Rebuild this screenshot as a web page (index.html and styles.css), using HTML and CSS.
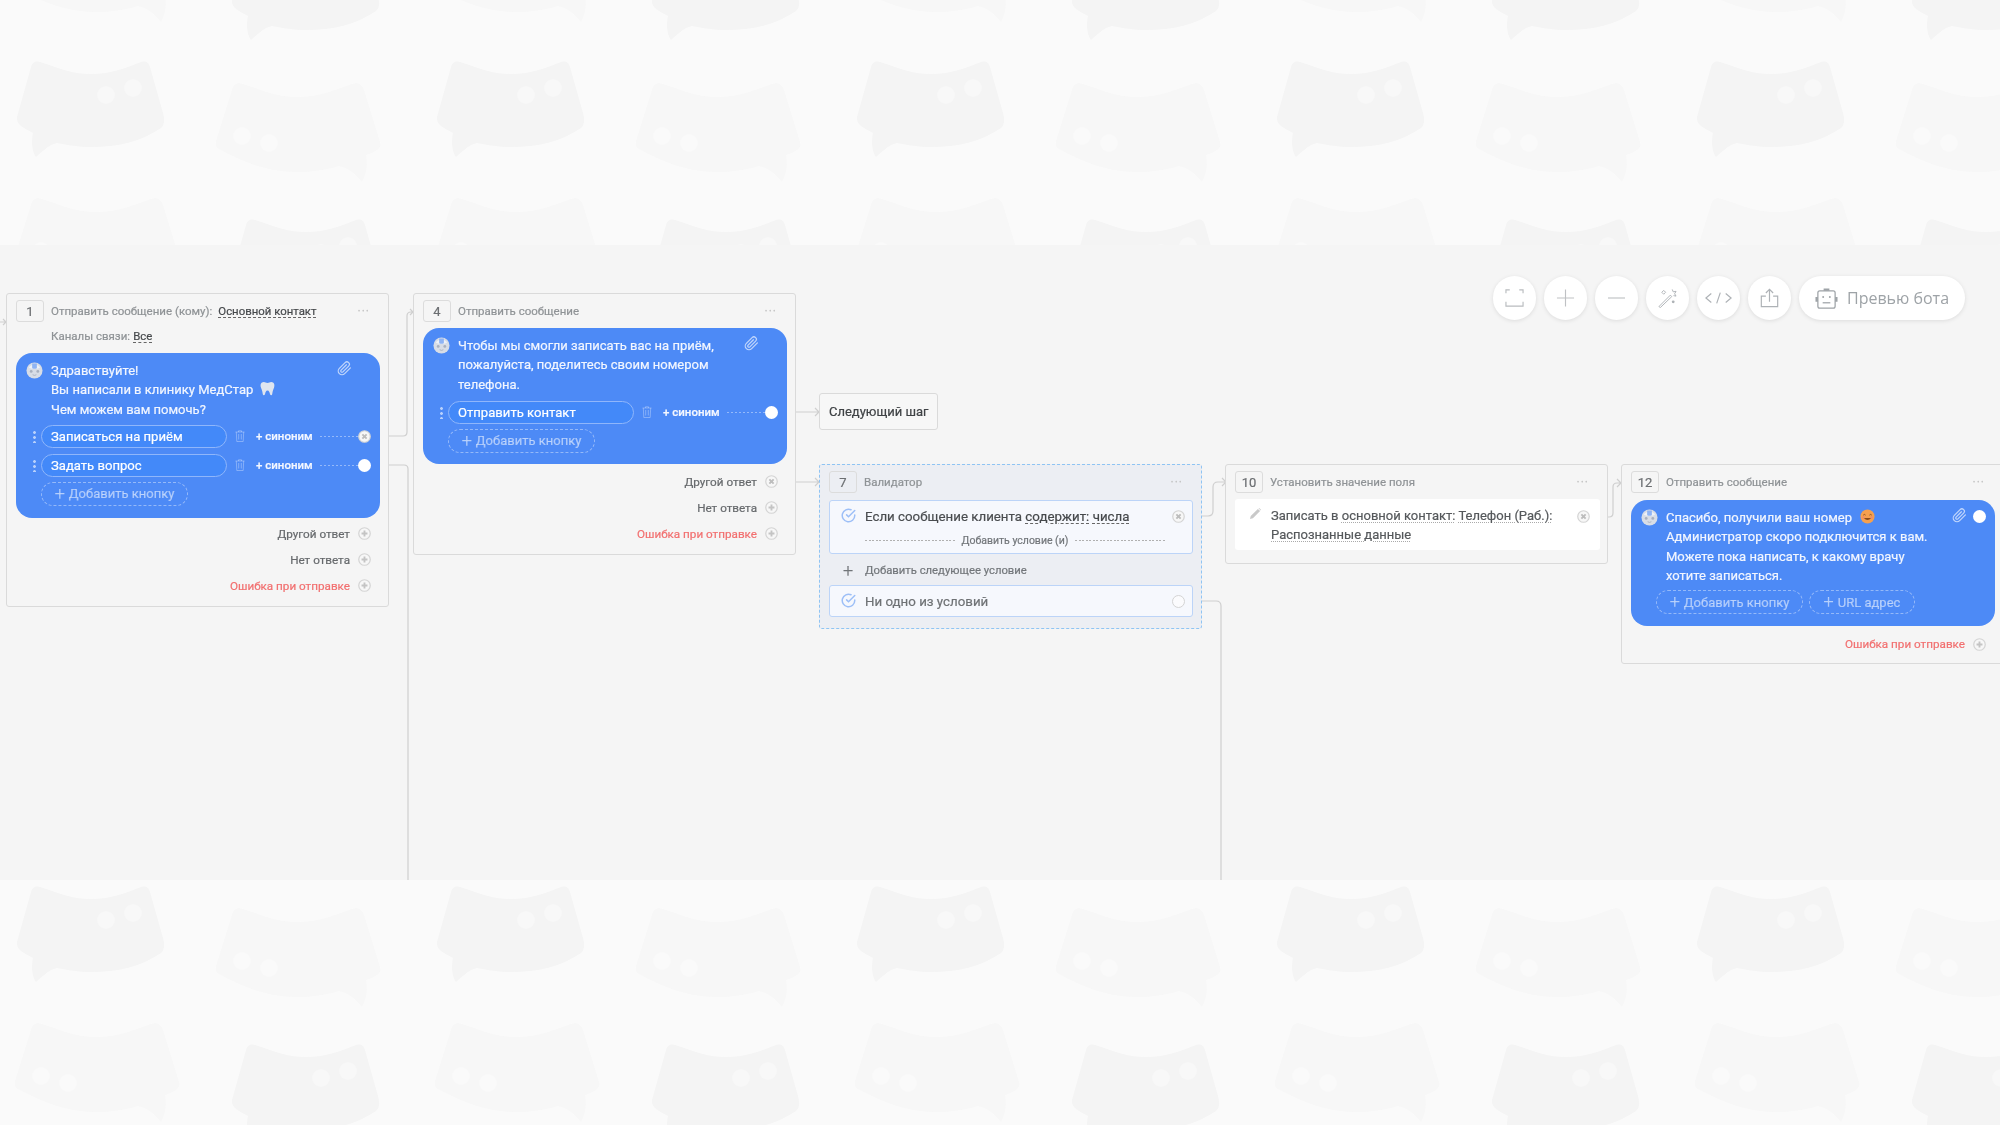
FILE: index.html
```html
<!DOCTYPE html>
<html lang="ru">
<head>
<meta charset="utf-8">
<title>Конструктор бота</title>
<link rel="stylesheet" href="styles.css">
</head>
<body>
<svg class="defs" width="0" height="0" aria-hidden="true">
  <defs>
    <symbol id="i-avatar" viewBox="0 0 18 18">
      <circle cx="9" cy="9" r="8.5" fill="#d8dde6"/>
      <path d="M3 5.5A8.500 8.500 0 0 1 15 5.500C13 8 5 8 3 5.500Z" fill="#eef2f8"/>
      <path d="M6.500 1.500h5v5q-2.500 1.500-5 0Z" fill="#8fb4f4"/>
      <circle cx="5.500" cy="10" r="1.500" fill="#a9b1bf"/>
      <circle cx="12.500" cy="10" r="1.500" fill="#a9b1bf"/>
      <path d="M7 13.500q2 1.300 4 0" fill="none" stroke="#a9b1bf"/>
    </symbol>
    <symbol id="i-clip" viewBox="0 0 24 24">
      <path d="M21.440 11.050l-9.190 9.190a6 6 0 0 1-8.490-8.490l9.190-9.190a4 4 0 0 1 5.660 5.660l-9.200 9.190a2 2 0 0 1-2.830-2.830l8.490-8.480" fill="none" stroke="currentColor" stroke-width="2" stroke-linecap="round"/>
    </symbol>
    <symbol id="i-trash" viewBox="0 0 10 12">
      <path d="M.5 2h9M3.500 2V.8h3V2M1.300 2l.5 9.500h6.400l.5-9.500M3.700 4v5.500M6.300 4v5.500" fill="none" stroke="currentColor" stroke-width=".9"/>
    </symbol>
    <symbol id="i-plus" viewBox="0 0 14 14">
      <circle cx="7" cy="7" r="6.200" fill="#f7f7f7" stroke="#d4d4d4" stroke-width="1.300"/>
      <path d="M7 3.800v6.400M3.800 7h6.400" stroke="#c4c4c4" stroke-width="2"/>
    </symbol>
    <symbol id="i-x" viewBox="0 0 14 14">
      <circle cx="7" cy="7" r="6.200" fill="#f7f7f7" stroke="#d4d4d4" stroke-width="1.300"/>
      <path d="M4.700 4.700l4.600 4.600M9.300 4.700l-4.600 4.600" stroke="#bdbdbd" stroke-width="2"/>
    </symbol>
    <symbol id="i-check" viewBox="0 0 24 24">
      <path d="M22 11.080V12a10 10 0 1 1-5.930-9.140M22 4 12 14.010l-3-3" fill="none" stroke="#9dbff7" stroke-width="2.400" stroke-linecap="round"/>
    </symbol>
  </defs>
</svg>

<main class="band">
  <svg class="wires" viewBox="0 245 2000 635" width="2000" height="635" aria-hidden="true">
    <g fill="none" stroke="#cfcfcf" stroke-width="1.200">
      <path d="M0 322H6M3 319l3 3-3 3"/>
      <path d="M371 436H403Q407 436 407 432V316Q407 312 411 312H413M410 309l3 3-3 3"/>
      <path d="M371 465H404Q408 465 408 469V880"/>
      <path d="M777 412H819M815 408l4 4-4 4"/>
      <path d="M777 482H819M815 478l4 4-4 4"/>
      <path d="M1183 516H1208Q1213 516 1213 511V487Q1213 482 1218 482H1226M1222 478l4 4-4 4"/>
      <path d="M1183 601H1216Q1221 601 1221 606V880"/>
      <path d="M1590 517H1609Q1613 517 1613 513V487Q1613 483 1617 483H1621M1617 479l4 4-4 4"/>
      <path d="M1985 517H2000"/>
    </g>
  </svg>

  <section class="node node-1">
    <header class="head">
      <span class="badge">1</span>
      <span class="title">Отправить сообщение (кому):</span>
      <span class="link head-link">Основной контакт</span>
      <span class="more">···</span>
    </header>
    <div class="channels"><span class="title">Каналы связи:</span> <span class="link">Все</span></div>
    <div class="bubble">
      <div class="msg">
        <svg class="avatar"><use href="#i-avatar"/></svg>
        <p class="msg-text">Здравствуйте!<br>Вы написали в клинику МедСтар
          <svg class="tooth" viewBox="0 0 16 16"><path d="M4 1C1 1 0 4 1 7c.6 2 1.400 3 2 7 .2 1.500 1.800 1.500 2.300 0 .5-2 1-4 2.700-4s2.200 2 2.700 4c.5 1.500 2.100 1.500 2.300 0 .6-4 1.400-5 2-7 1-3 0-6-3-6-1.500 0-2.500 1-4 1S5.500 1 4 1Z" fill="#dfe5ef"/></svg>
          <br>Чем можем вам помочь?</p>
        <svg class="clip"><use href="#i-clip"/></svg>
      </div>
      <div class="btn-row">
        <span class="grip"></span>
        <span class="pill">Записаться на приём</span>
        <svg class="trash"><use href="#i-trash"/></svg>
        <span class="syn">+ синоним</span>
        <span class="dots-line"></span>
        <svg class="port"><use href="#i-x"/></svg>
      </div>
      <div class="btn-row">
        <span class="grip"></span>
        <span class="pill">Задать вопрос</span>
        <svg class="trash"><use href="#i-trash"/></svg>
        <span class="syn">+ синоним</span>
        <span class="dots-line"></span>
        <span class="port port-solid"></span>
      </div>
      <div class="add-row"><span class="add"><span class="add-plus">+</span>Добавить кнопку</span></div>
    </div>
    <div class="outs outs-tight">
      <div class="out">Другой ответ<svg class="port"><use href="#i-plus"/></svg></div>
      <div class="out">Нет ответа<svg class="port"><use href="#i-plus"/></svg></div>
      <div class="out out-err">Ошибка при отправке<svg class="port"><use href="#i-plus"/></svg></div>
    </div>
  </section>

  <section class="node node-4">
    <header class="head">
      <span class="badge">4</span>
      <span class="title">Отправить сообщение</span>
      <span class="more">···</span>
    </header>
    <div class="bubble">
      <div class="msg">
        <svg class="avatar"><use href="#i-avatar"/></svg>
        <p class="msg-text">Чтобы мы смогли записать вас на приём,<br>пожалуйста, поделитесь своим номером<br>телефона.</p>
        <svg class="clip"><use href="#i-clip"/></svg>
      </div>
      <div class="btn-row">
        <span class="grip"></span>
        <span class="pill">Отправить контакт</span>
        <svg class="trash"><use href="#i-trash"/></svg>
        <span class="syn">+ синоним</span>
        <span class="dots-line"></span>
        <span class="port port-solid"></span>
      </div>
      <div class="add-row"><span class="add"><span class="add-plus">+</span>Добавить кнопку</span></div>
    </div>
    <div class="outs">
      <div class="out">Другой ответ<svg class="port"><use href="#i-x"/></svg></div>
      <div class="out">Нет ответа<svg class="port"><use href="#i-plus"/></svg></div>
      <div class="out out-err">Ошибка при отправке<svg class="port"><use href="#i-plus"/></svg></div>
    </div>
  </section>

  <div class="next-step">Следующий шаг</div>

  <section class="node node-7">
    <header class="head">
      <span class="badge">7</span>
      <span class="title">Валидатор</span>
      <span class="more">···</span>
    </header>
    <div class="cond">
      <div class="cond-main">
        <svg class="check"><use href="#i-check"/></svg>
        <span class="cond-text">Если сообщение клиента <span class="link">содержит:</span> <span class="link">числа</span></span>
        <svg class="port"><use href="#i-x"/></svg>
      </div>
      <div class="cond-and"><span class="and-line"></span><span>Добавить условие (и)</span><span class="and-line"></span></div>
    </div>
    <div class="add-next"><span class="add-next-plus">+</span>Добавить следующее условие</div>
    <div class="cond cond-none">
      <div class="cond-main">
        <svg class="check"><use href="#i-check"/></svg>
        <span class="cond-text cond-muted">Ни одно из условий</span>
        <span class="port port-open"></span>
      </div>
    </div>
  </section>

  <section class="node node-10">
    <header class="head">
      <span class="badge">10</span>
      <span class="title">Установить значение поля</span>
      <span class="more">···</span>
    </header>
    <div class="setter">
      <svg class="pencil" viewBox="0 0 12 12"><path d="M0 12l.8-3.200L8.600 1l2.400 2.400-7.800 7.800ZM9.300.3l.7-.3 2 2-.300.7Z" fill="#c9c9c9"/></svg>
      <p class="setter-text">Записать в <span class="link-soft">основной контакт:</span> <span class="link-soft">Телефон (Раб.):</span><br><span class="link-soft">Распознанные данные</span></p>
      <svg class="port"><use href="#i-x"/></svg>
    </div>
  </section>

  <section class="node node-12">
    <header class="head">
      <span class="badge">12</span>
      <span class="title">Отправить сообщение</span>
      <span class="more">···</span>
    </header>
    <div class="bubble">
      <div class="msg">
        <svg class="avatar"><use href="#i-avatar"/></svg>
        <p class="msg-text">Спасибо, получили ваш номер
          <svg class="smile" viewBox="0 0 16 16"><circle cx="8" cy="8" r="7.500" fill="#f5a04e"/><path d="M3.500 6.500q1.200-1.500 2.400 0M10.100 6.500q1.200-1.500 2.400 0" fill="none" stroke="#8a4b1c" stroke-width="1"/><path d="M4 9.500q4 4.500 8 0Z" fill="#8a4b1c"/><circle cx="3.500" cy="9" r="1.300" fill="#f08a6a"/><circle cx="12.500" cy="9" r="1.300" fill="#f08a6a"/></svg>
          <br>Администратор скоро подключится к вам.<br>Можете пока написать, к какому врачу<br>хотите записаться.</p>
        <svg class="clip"><use href="#i-clip"/></svg>
      </div>
      <span class="port port-solid port-float"></span>
      <div class="add-row">
        <span class="add"><span class="add-plus">+</span>Добавить кнопку</span>
        <span class="add add-url"><span class="add-plus">+</span>URL адрес</span>
      </div>
    </div>
    <div class="outs">
      <div class="out out-err">Ошибка при отправке<svg class="port"><use href="#i-plus"/></svg></div>
    </div>
  </section>

  <nav class="tools">
    <button class="tool" type="button" aria-label="Во весь экран">
      <svg viewBox="0 0 20 20"><path d="M1 5V1.500H5M15 1.500H19V5M1 14V18.500H19V14" fill="none" stroke="#b9bcbf" stroke-width="1.200"/></svg>
    </button>
    <button class="tool" type="button" aria-label="Увеличить">
      <svg viewBox="0 0 20 20"><path d="M10 1V19M1 10H19" stroke="#bfc1c4" stroke-width="1.200"/></svg>
    </button>
    <button class="tool" type="button" aria-label="Уменьшить">
      <svg viewBox="0 0 20 20"><path d="M1 10H19" stroke="#bfc1c4" stroke-width="1.200"/></svg>
    </button>
    <button class="tool" type="button" aria-label="Авторасстановка">
      <svg viewBox="0 0 20 20"><path d="M1 19 13 7l1.500 1.500L2.500 20Z" fill="none" stroke="#aeb2b6"/><path d="M15 1l1 2.500L19 3l-1.500 2.500L19 8l-2.700-.5" fill="none" stroke="#aeb2b6"/><path d="M4 4l2-2 2 2-2 2Z" fill="none" stroke="#aeb2b6"/><circle cx="16" cy="14" r="1.500" fill="#aeb2b6"/></svg>
    </button>
    <button class="tool tool-code" type="button" aria-label="Код">
      <svg viewBox="0 0 30 14"><path d="M7 2 1 7l6 5M23 2l6 5-6 5M17 1l-4 12" fill="none" stroke="#aeb2b6" stroke-width="1.300"/></svg>
    </button>
    <button class="tool" type="button" aria-label="Экспорт">
      <svg viewBox="0 0 20 22"><path d="M6 9H1V20.500H19V9H14M10 15V1.500M6 5.500l4-4 4 4" fill="none" stroke="#aeb2b6" stroke-width="1.300"/></svg>
    </button>
    <button class="tool tool-wide" type="button">
      <svg viewBox="0 0 24 22"><rect x="3" y="3.500" width="18" height="18" rx="2" fill="none" stroke="#9ea3a7" stroke-width="1.300"/><path d="M9 1h6v2.500H9ZM.5 10h2.500v5H.5ZM21 10h2.500v5H21Z" fill="#9ea3a7"/><circle cx="8.500" cy="10" r="1" fill="#9ea3a7"/><circle cx="15.500" cy="10" r="1" fill="#9ea3a7"/><path d="M8 16h8" stroke="#9ea3a7" stroke-width="1.300"/></svg>
      Превью бота
    </button>
  </nav>
</main>
</body>
</html>
```
FILE: styles.css
```css
* { box-sizing: border-box; }

html, body { margin: 0; height: 1125px; overflow: hidden; }

body {
  padding-top: 245px;
  font-family: Roboto, "Noto Sans", sans-serif;
  color: #4a4d50;
  background-color: #fafafa;
  background-image: url("data:image/svg+xml,%3Csvg xmlns='http://www.w3.org/2000/svg' xmlns:xlink='http://www.w3.org/1999/xlink' width='420' height='275'%3E%3Cdefs%3E%3Cg id='a'%3E%3Cpath fill='%23f4f4f4' d='M31 67Q33 60 40 62C60 68 70 74 91 74C112 74 125 68 141 62Q148 60 150 67L163 113Q166 124 161 128C140 142 118 147 91 147C78 147 68 145 57 143C48 145 42 152 36 157C32 152 31 142 33 133C24 128 16 125 17 117Z'/%3E%3Ccircle cx='106' cy='95' r='9' fill='%23f8f8f8'/%3E%3Ccircle cx='133' cy='88' r='9' fill='%23f8f8f8'/%3E%3C/g%3E%3Cg id='l'%3E%3Cpath fill='%23f7f7f7' d='M232 90Q234 81 243 84C262 90 275 97 297 97C320 97 337 89 352 84Q361 81 364 90L380 142Q383 150 366 155C368 165 366 175 362 182C355 173 348 168 339 166C325 170 312 172 297 172C265 172 240 160 219 149Q215 147 216 141Z'/%3E%3Ccircle cx='242' cy='136' r='9' fill='%23fafafa'/%3E%3Ccircle cx='269' cy='143' r='9' fill='%23fafafa'/%3E%3C/g%3E%3C/defs%3E%3Cuse xlink:href='%23a'/%3E%3Cuse xlink:href='%23a' x='215' y='158'/%3E%3Cuse xlink:href='%23a' x='215' y='-117'/%3E%3Cuse xlink:href='%23l'/%3E%3Cuse xlink:href='%23l' x='-201' y='115'/%3E%3Cuse xlink:href='%23l' x='-201' y='-160'/%3E%3C/svg%3E");
  background-size: 420px 275px;
}

.defs { position: absolute; }

.band {
  position: relative;
  height: 635px;
  overflow: hidden;
  background: #f5f5f5;
  filter: blur(.4px);
  -webkit-text-stroke: .2px;
}

.wires { position: absolute; left: 0; top: 0; }

/* Nodes on the free canvas */
.node {
  position: absolute;
  width: 383px;
  padding: 6px 8px 0 9px;
  border: 1px solid #dadada;
  border-radius: 3px;
  background: #f5f5f5;
  font-size: 12px;
}
.node-1 { left: 6px; top: 48px; height: 314px; }
.node-4 { left: 413px; top: 48px; height: 262px; }
.node-7 { left: 819px; top: 219px; height: 165px; background: #eceef3; border: 1px dashed #8fc4f3; }
.node-10 { left: 1225px; top: 219px; height: 100px; }
.node-12 { left: 1621px; top: 219px; height: 200px; }

.head { display: flex; align-items: center; height: 22px; margin-bottom: 6px; }
.node-7 .head, .node-12 .head { margin-bottom: 7px; }
.badge {
  display: flex; align-items: center; justify-content: center;
  flex: none; width: 28px; height: 22px; margin-right: 7px;
  border: 1px solid #dcdcdc; border-radius: 3px;
  font-size: 13px; color: #6c6f72;
}
.title { color: #8f9396; font-size: 11.500px; }
.head-link { margin-left: 6px; }
.more { margin-left: auto; margin-right: 10px; color: #c4c4c4; font-size: 12px; letter-spacing: 1px; line-height: 1; }

.link { color: #45484b; font-size: 11.400px; text-decoration: underline dashed #666 1px; text-underline-offset: 2px; }
.node-7 .cond-text .link { font-size: inherit; }

.channels { height: 27px; margin-left: 35px; margin-top: -2px; line-height: 20px; }

/* Blue message */
.bubble {
  position: relative;
  width: 364px;
  padding: 8px 0 11px;
  border-radius: 16px;
  background: #4d8af6;
  color: #f2f6ff;
  font-size: 13px;
}
.node-1 .bubble { padding-bottom: 12px; }
.node-12 .bubble { padding-bottom: 12px; }
.msg { display: flex; align-items: flex-start; padding: 0 28px 0 10px; }
.avatar { flex: none; width: 17px; height: 17px; margin-top: 1px; margin-right: 8px; }
.msg-text { flex: 1; margin: 0; line-height: 19.300px; }
.clip { flex: none; width: 15px; height: 15px; margin-left: 6px; color: rgba(255,255,255,.65); }
.tooth { width: 15px; height: 15px; margin-left: 3px; vertical-align: -2px; }
.smile { width: 15px; height: 15px; margin-left: 5px; vertical-align: -2px; }

.btn-row { display: flex; align-items: center; height: 23px; margin-top: 6px; padding-left: 17px; }
.node-4 .msg + .btn-row { margin-top: 7px; }
.grip { flex: none; width: 3px; height: 13px; margin-right: 5px; background: radial-gradient(circle, rgba(255,255,255,.6) 1.300px, transparent 1.500px) 0 0 / 3px 5px; }
.pill {
  display: flex; align-items: center;
  flex: none; width: 186px; height: 23px; padding-left: 9px;
  border: 1px solid #8fb6fb; border-radius: 12px;
  background: #4389f9; color: #fff; font-size: 13.100px;
}
.trash { flex: none; width: 10px; height: 12px; margin: 0 11px 0 8px; color: rgba(255,255,255,.35); }
.syn { flex: none; width: 57px; font-size: 11.500px; font-weight: 500; color: #f4f7ff; white-space: nowrap; }
.dots-line { flex: none; width: 38px; height: 1px; margin-left: 7px; background: repeating-linear-gradient(90deg, rgba(255,255,255,.4) 0 2px, transparent 2px 4px); }

.port { flex: none; display: block; width: 13px; height: 13px; }
.port-solid { border-radius: 50%; background: #fff; }
.port-open { border-radius: 50%; background: #fbfbfd; border: 1px solid #d4d4d4; }
.port-float { position: absolute; left: 342px; top: 10px; }

.add-row { display: flex; gap: 6px; margin-top: 5px; padding-left: 25px; }
.add {
  display: flex; align-items: center; justify-content: center;
  width: 147px; height: 24px;
  border: 1px dashed rgba(255,255,255,.4); border-radius: 12px;
  color: rgba(255,255,255,.5); font-size: 13px;
}
.add-url { width: 106px; }
.add-plus { margin-right: 4px; font-size: 18px; font-weight: 300; line-height: 1; }

.outs { padding-top: 5px; }
.outs-tight { padding-top: 3px; }
.out { display: flex; align-items: center; justify-content: flex-end; height: 26px; padding-right: 9px; font-size: 11.700px; color: #66696c; }
.out .port { margin-left: 8px; }
.out-err { color: #f27070; }

.next-step {
  position: absolute; left: 819px; top: 148px;
  display: flex; align-items: center;
  width: 119px; height: 37px; padding-left: 9px;
  border: 1px solid #dadada; border-radius: 3px;
  background: #f7f7f7; color: #3f4245; font-size: 13px;
}

/* Validator */
.cond { width: 364px; border: 1px solid #bcd4f8; border-radius: 3px; background: #f6f8fd; }
.cond-main { display: flex; align-items: flex-start; padding: 7px 7px 0 11px; height: 30px; }
.check { flex: none; width: 15px; height: 15px; margin-right: 9px; }
.cond-text { flex: 1; font-size: 13.300px; color: #4a4d50; line-height: 18px; }
.cond-main .port { margin-top: 2px; }
.cond-muted { color: #6f7275; }
.cond-and { display: flex; align-items: center; gap: 7px; height: 22px; padding: 0 27px 4px 35px; font-size: 10.500px; color: #72767a; white-space: nowrap; }
.and-line { flex: 1; height: 1px; background: repeating-linear-gradient(90deg, #b0b0b0 0 2px, transparent 2px 3.500px); }
.add-next { display: flex; align-items: center; height: 31px; padding: 2px 0 0 14px; font-size: 11.300px; color: #72767a; }
.add-next-plus { width: 22px; font-size: 18px; font-weight: 300; line-height: 1; }

/* Setter */
.setter { display: flex; align-items: flex-start; width: 365px; height: 51px; padding: 7px 10px 0 15px; border-radius: 3px; background: #fff; }
.pencil { flex: none; width: 11px; height: 11px; margin-top: 2px; margin-right: 10px; }
.setter-text { flex: 1; margin: 0; font-size: 13px; line-height: 19px; color: #55585b; }
.setter .port { margin-top: 4px; }
.link-soft { text-decoration: underline dotted #aaa 1px; text-underline-offset: 2px; }

/* Toolbar */
.tools { position: absolute; left: 1493px; top: 31px; display: flex; gap: 8px; }
.tool {
  display: flex; align-items: center; justify-content: center; gap: 9px;
  width: 43px; height: 44px; padding: 0;
  border: 0; border-radius: 22px;
  background: #fff; box-shadow: 0 1px 4px rgba(0,0,0,.1);
  font-family: "Open Sans", sans-serif; font-size: 16px; color: #9ea3a7;
  -webkit-text-stroke: 0;
}
.tool svg { width: 19px; height: 20px; }
.tool-code svg { width: 27px; height: 14px; }
.tool-wide { width: 166px; }
.tool-wide svg { width: 23px; height: 22px; }
```
